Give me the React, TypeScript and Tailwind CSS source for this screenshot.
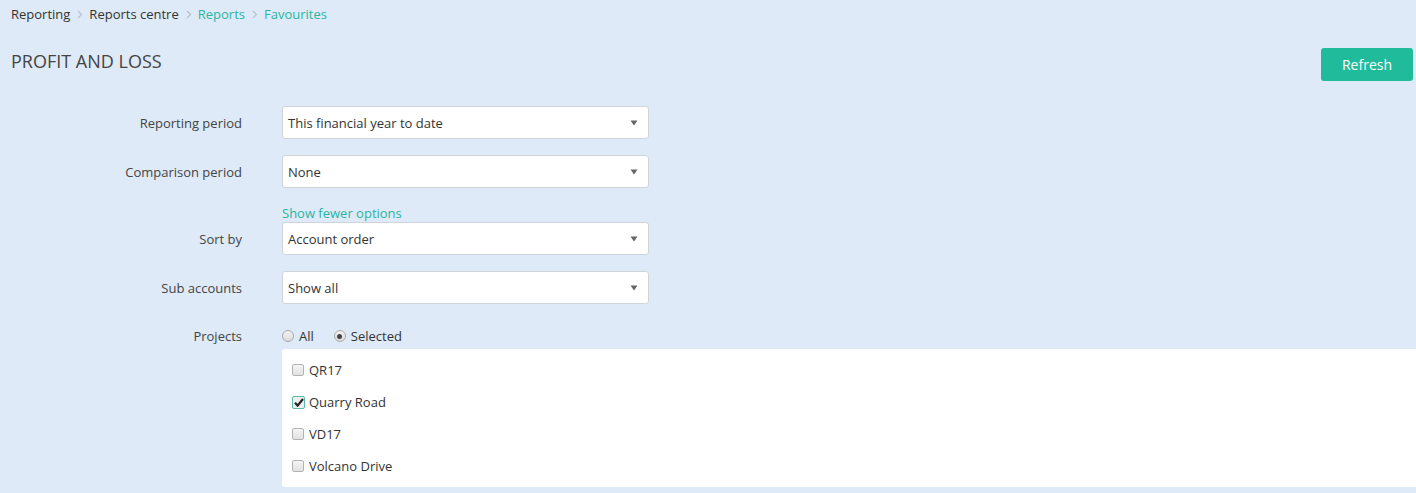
import React from "react";

const Chevron = () => (
  <svg width="6" height="9" viewBox="0 0 6 9" className="ml-[7px] mr-[6px]">
    <path d="M1 1l3.5 3.5L1 8" fill="none" stroke="#b8c2cc" strokeWidth="1.2" />
  </svg>
);

const Arrow = () => (
  <svg width="8" height="6" viewBox="0 0 8 6">
    <path d="M0.5 0.5h7L4 5.5z" fill="#666" />
  </svg>
);

function Select({ value }: { value: string }) {
  return (
    <div className="w-[367px] h-[33px] bg-white border border-[#cfd4d9] rounded-[3px] flex items-center justify-between pl-[5px] pr-[10px]">
      <span className="text-[#333]">{value}</span>
      <Arrow />
    </div>
  );
}

function Row({ label, children }: { label: string; children: React.ReactNode }) {
  return (
    <div className="flex items-center">
      <div className="w-[231px] text-right text-[#444]">{label}</div>
      <div className="ml-[40px]">{children}</div>
    </div>
  );
}

function Radio({ checked, label }: { checked?: boolean; label: string }) {
  return (
    <div className="flex items-center">
      <span className="w-[12px] h-[12px] rounded-full border border-[#a9a9a9] bg-gradient-to-b from-[#f2f2f2] to-[#dcdcdc] flex items-center justify-center">
        {checked && <span className="w-[5px] h-[5px] rounded-full bg-[#444]" />}
      </span>
      <span className="ml-[5px] text-[#333]">{label}</span>
    </div>
  );
}

function Check({ checked, label }: { checked?: boolean; label: string }) {
  return (
    <div className="h-[32px] flex items-center">
      <span
        className={
          checked
            ? "w-[13px] h-[13px] rounded-[2px] border border-[#5ab9aa] bg-[#eee] flex items-center justify-center"
            : "w-[12px] h-[12px] rounded-[2px] border border-[#b4b4b4] bg-gradient-to-b from-[#f5f5f5] to-[#e2e2e2]"
        }
      >
        {checked && (
          <svg width="10" height="9" viewBox="0 0 10 9">
            <path d="M1 4.8l2.6 2.8L9 1" fill="none" stroke="#222" strokeWidth="2.2" />
          </svg>
        )}
      </span>
      <span className={checked ? "ml-[4px] text-[#333]" : "ml-[5px] text-[#333]"}>{label}</span>
    </div>
  );
}

export default function App() {
  return (
    <div className="min-h-[493px] bg-[#deeaf7] pl-[11px] font-['Open_Sans',sans-serif] text-[13px] leading-[18px] text-[#333]">
      <div className="h-[28px] flex items-center">
        <span className="text-[#333]">Reporting</span>
        <Chevron />
        <span className="text-[#333]">Reports centre</span>
        <Chevron />
        <span className="text-[#2bb5a0]">Reports</span>
        <Chevron />
        <span className="text-[#2bb5a0]">Favourites</span>
      </div>

      <div className="flex justify-between items-start mt-[20px] pr-[3px]">
        <h1 className="text-[18px] leading-[24px] text-[#444] mt-[1px]">PROFIT AND LOSS</h1>
        <button className="w-[92px] h-[33px] rounded-[3px] bg-[#1fbb9b] text-white text-[14px]">Refresh</button>
      </div>

      <div className="mt-[25px] flex flex-col">
        <Row label="Reporting period">
          <Select value="This financial year to date" />
        </Row>
        <div className="mt-[16px]">
          <Row label="Comparison period">
            <Select value="None" />
          </Row>
        </div>
        <div className="ml-[271px] mt-[16px] text-[#2bb5a0]">Show fewer options</div>
        <Row label="Sort by">
          <Select value="Account order" />
        </Row>
        <div className="mt-[16px]">
          <Row label="Sub accounts">
            <Select value="Show all" />
          </Row>
        </div>
        <div className="mt-[23px]">
          <Row label="Projects">
            <div className="flex items-center gap-[20px]">
              <Radio label="All" />
              <Radio checked label="Selected" />
            </div>
          </Row>
        </div>
        <div className="ml-[271px] mt-[4px] bg-white rounded-l-[3px] pl-[10px] py-[5px]">
          <Check label="QR17" />
          <Check checked label="Quarry Road" />
          <Check label="VD17" />
          <Check label="Volcano Drive" />
        </div>
      </div>
    </div>
  );
}
